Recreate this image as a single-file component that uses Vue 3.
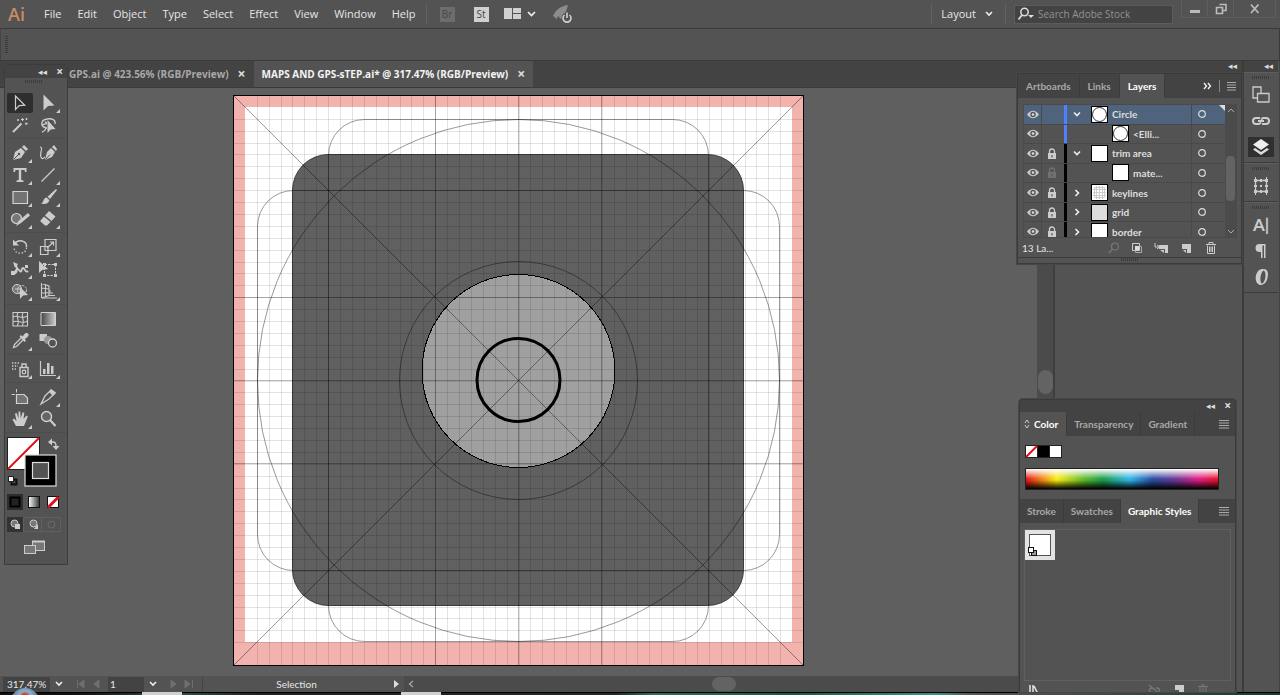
<script setup>
import { ref } from 'vue'

const menus = ['File', 'Edit', 'Object', 'Type', 'Select', 'Effect', 'View', 'Window', 'Help']

const L = '#cccccc'
const s = (d, w = 1.3, extra = '') => `<path d="${d}" fill="none" stroke="${L}" stroke-width="${w}" ${extra}/>`
const f = (d, c = L) => `<path d="${d}" fill="${c}"/>`

const toolGroups = [
  [
    { name: 'Selection', active: true, art: s('M5.5 3V16.5L9.2 12.6L14.8 12.2Z', 1.2) },
    { name: 'Direct Selection', more: true, art: f('M5.5 1.500V17.500L10 13L16.500 12.500Z') },
    { name: 'Magic Wand', art: s('M3 17L11.5 8.5', 2) + s('M12.5 3V6M11 4.5H14M16 7.500V10M15 8.700H18M8 4V6M7 5H9M16.500 3V5M15.500 4H17.500', 1) },
    { name: 'Lasso', art: s('M9 13C2 13 2 5 9 4C14 3 18 5 17 9M7 9C4 9 4 12 6 12C9 12 8 16 4 17M7 9C9 9 9 7 7 7', 1.3) + f('M9.500 5V18L12.700 14.500L17.500 14Z') }
  ],
  [
    { name: 'Pen', more: true, art: f('M3 17L5 9L11 5L15 9L11 15Z M12 4L14 2L18 6L16 8Z') + '<path d="M3.500 16.500L8.500 11.500" stroke="#535353" stroke-width="1"/><circle cx="9" cy="11" r="1.200" fill="#535353"/>' },
    { name: 'Curvature', art: f('M7 17L9 9L13 5L17 9L14 14Z M14 4L16 2L19 6L18 8Z') + s('M2 4C6 4 1 11 3 14C4 17 6 15 7 14', 1.2) + '<path d="M7.500 16.500L12 11.500" stroke="#535353"/>' },
    { name: 'Type', more: true, art: f('M3.500 3H16.500V7H15L14.500 5H11.200V15L13.500 15.500V17H6.500V15.500L8.800 15V5H5.500L5 7H3.500Z') },
    { name: 'Line', more: true, art: s('M3.500 16.500L16.500 3.500', 1.3) },
    { name: 'Rectangle', more: true, art: '<path d="M3 4.500H17.500V16.500H3Z" fill="#737373" stroke="#d2d2d2" stroke-width="1.200"/>' },
    { name: 'Paintbrush', more: true, art: f('M18 2L19 3L12 12L9.500 9.700Z M8.500 10.500L11.300 13C11 17 6 17.500 3 16.500C6 15.500 5 11 8.500 10.500Z') },
    { name: 'Shaper', more: true, art: '<circle cx="6.500" cy="9.500" r="5" fill="#777" stroke="#d2d2d2" stroke-width="1.200"/>' + f('M18 4L20 6.500L11 14L6 17L8.500 12Z') },
    { name: 'Eraser', more: true, art: f('M11 2L17.500 7.500L13.500 12L7 6.500Z M6 7.500L12.500 13L9 16.500H7L2.500 12.500V11.500Z') }
  ],
  [
    { name: 'Rotate', more: true, art: s('M4.500 7C8 1.500 17 3.500 16.500 10', 1.4) + s('M16.500 10.500C16 18 5 18 4 11', 1.3, 'stroke-dasharray="1.500 1.700"') + f('M3 2.500V8.500H9Z') },
    { name: 'Scale', more: true, art: s('M7 2.500H18V13.500H7ZM2.500 9.500H10V17.500H2.500Z', 1.2) + s('M9 11L15.500 5M12 5H15.500V8.500', 1.2) },
    { name: 'Width', more: true, art: s('M2.500 14C7 16 8 10 6 6M5 13C9 4 10 18 12 10C14 6 15 15 18 12', 1.8) + f('M3 3L8 5L5 9ZM1 12H5V16H1ZM15 6H18V9H15Z') },
    { name: 'Free Transform', art: s('M6.500 5.500H17.500V16.500H6.500Z', 1, 'stroke-dasharray="2.500 1"') + f('M5 4H8V7H5ZM16 4H19V7H16ZM16 15H19V18H16ZM5 15H8V18H5ZM1 2V14L4 11L10 10Z') },
    { name: 'Shape Builder', more: true, art: '<circle cx="7" cy="8" r="4.500" fill="#777" stroke="#d2d2d2"/><circle cx="12" cy="9" r="4.500" fill="none" stroke="#d2d2d2" stroke-dasharray="2 1"/>' + f('M10 6V18L13 14.500L18 14Z') + s('M5 8H11', 1) },
    { name: 'Perspective Grid', more: true, art: s('M3.500 2V17M3.500 2.500L11 5V14.500L3.500 17M7.500 4V16M3.500 7L11 8M3.500 12L11 11.500', 1.1) + s('M4 17H19M11 14.500H17M11 12H15M11 10H13', 1) }
  ],
  [
    { name: 'Mesh', art: s('M3 3.500H17.500V17H3ZM3 8C8 5 11 11 17.500 7M3 13C8 10 12 16 17.500 12M8 3.500C5 8 11 12 7 17M13 3.500C10 8 16 11 12 17', 1.1) },
    { name: 'Gradient', art: '<defs><linearGradient id="tg"><stop stop-color="#444"/><stop offset="1" stop-color="#ccc"/></linearGradient></defs><path d="M3 3.500H17.500V16.500H3Z" fill="url(#tg)" stroke="#d2d2d2"/>' },
    { name: 'Eyedropper', more: true, art: s('M11 7L4.500 13.500L3.500 16.500L6.500 15.500L13 9', 1.3) + f('M9.500 5.500L11 4L12.500 5.500L15 2.500C18 1 20 4 17.500 6L14.800 8L16 9.500L14.500 11Z') },
    { name: 'Blend', art: f('M1.500 3H9V10H1.500Z') + '<circle cx="10" cy="9" r="4" fill="#999"/><circle cx="14.500" cy="12" r="4" fill="#535353" stroke="#d2d2d2" stroke-width="1.300"/>' }
  ],
  [
    { name: 'Symbol Sprayer', more: true, art: s('M10 8.500H18V17.500H10ZM12 8V5H16V8', 1.4) + '<circle cx="14" cy="13" r="1.800" fill="none" stroke="#d2d2d2" stroke-width="1.200"/>' + s('M2 4H10M2 7H8M2 10H6', 1.4, 'stroke-dasharray="1.400 1.400"') },
    { name: 'Column Graph', more: true, art: s('M2.500 2V16.500H18', 1.2) + f('M5 10H7.500V15H5ZM9 4H11.500V15H9ZM13 7H15.500V15H13Z') }
  ],
  [
    { name: 'Artboard', art: '<path d="M6.500 7.500H14L17.500 11V16.500H6.500Z" fill="#737373" stroke="#d2d2d2" stroke-width="1.200"/>' + s('M6.500 2V5.500M1.500 7.500H5', 1) },
    { name: 'Slice', more: true, art: s('M3 17L7 9L13 3L17 6L11 12Z', 1.3) + f('M13 2L18 5.500L15 9L11 5Z') },
    { name: 'Hand', more: true, art: f('M6 17L2.500 10.500L4 9.500L6.500 12L5 4.500L6.700 4L8.500 9.500V2.500H10.300L10.700 9L12.700 3.200L14.300 3.700L13.500 10L16.500 6.500L17.800 7.500L14 17Z') },
    { name: 'Zoom', art: '<circle cx="8.500" cy="7.500" r="5" fill="#666" stroke="#d2d2d2" stroke-width="1.400"/>' + s('M12 11L17.500 17', 2.2) }
  ]
]

const layers = ref([
  { name: 'Circle', thumb: 'ring', color: 'blue', open: true, selected: true },
  { name: '<Elli...', thumb: 'ring', color: 'blue', child: true },
  { name: 'trim area', thumb: 'plain', color: 'black', open: true, lock: 'on' },
  { name: 'mate...', thumb: 'plain', color: 'black', child: true, lock: 'dim' },
  { name: 'keylines', thumb: 'keys', color: 'black', closed: true, lock: 'on' },
  { name: 'grid', thumb: 'grey', color: 'black', closed: true, lock: 'on' },
  { name: 'border', thumb: 'plain', color: 'black', closed: true, lock: 'on' }
])

const step = 571 / 48
const gridLines = Array.from({ length: 45 }, (_, i) => Math.round((i + 2) * step) + 0.5)
const guides = [202.5, 285.5, 368.5]
</script>

<template>
  <div class="app">
    <header class="menubar">
      <span class="logo">Ai</span>
      <nav class="menus">
        <button v-for="m in menus" :key="m">{{ m }}</button>
      </nav>
      <span class="rule"></span>
      <button class="sq dim">Br</button>
      <button class="sq">St</button>
      <button class="arrange" aria-label="Arrange documents">
        <svg width="32" height="14" viewBox="0 0 32 14"><path d="M0 1H8V12H0ZM9 1H17V6H9ZM9 7H17V12H9Z" fill="#d0d0d0" /><path d="M24 5L27.500 8.500L31 5" fill="none" stroke="#eee" stroke-width="1.700" /></svg>
      </button>
      <button class="gpu" aria-label="GPU performance">
        <svg width="22" height="20" viewBox="0 0 22 20"><path d="M1 12C3 7 8 2 16 1C15 6 13 10 9 15L6 12ZM1 12L6 11L5 15Z" fill="#8c8c8c" /><circle cx="15" cy="14" r="5.500" fill="#535353" /><path d="M12.500 11A4 4 0 1 0 17.500 11M15 8.500V14" fill="none" stroke="#d0d0d0" stroke-width="1.600" /></svg>
      </button>
      <span class="grow"></span>
      <span class="rule"></span>
      <button class="layout">Layout
        <svg width="8" height="6" viewBox="0 0 8 6"><path d="M1 1L4 4L7 1" fill="none" stroke="#eee" stroke-width="1.600" /></svg>
      </button>
      <span class="rule"></span>
      <label class="search">
        <svg width="18" height="14" viewBox="0 0 18 14"><circle cx="7.500" cy="5" r="3.700" fill="none" stroke="#ddd" stroke-width="1.500" /><path d="M5 8L1.500 12.500" stroke="#ddd" stroke-width="1.800" /><path d="M11 8H17L14 11Z" fill="#ddd" /></svg>
        <input type="search" placeholder="Search Adobe Stock" aria-label="Search Adobe Stock" />
      </label>
      <div class="winbtns">
        <button aria-label="Minimize"><svg width="12" height="12" viewBox="0 0 12 12"><path d="M1 7H11V10H1Z" fill="#bbb" /></svg></button>
        <button aria-label="Restore"><svg width="12" height="12" viewBox="0 0 12 12"><path d="M4.500 1.500H11V7.500H8M1.500 4.500H7.500V10.500H1.500Z" fill="none" stroke="#bbb" stroke-width="1.600" /></svg></button>
        <button class="wide" aria-label="Close"><svg width="12" height="12" viewBox="0 0 12 12"><path d="M2 1.500L9.500 10M9.500 1.500L2 10" stroke="#bbb" stroke-width="1.800" /></svg></button>
      </div>
    </header>

    <div class="control"><span class="vgrip"></span></div>

    <div class="main">
      <section class="doc">
        <div class="tabs" role="tablist">
          <button class="tab first" role="tab">GPS.ai @ 423.56% (RGB/Preview)<span class="x">×</span></button>
          <button class="tab on" role="tab" aria-selected="true">MAPS AND GPS-sTEP.ai* @ 317.47% (RGB/Preview)<span class="x">×</span></button>
        </div>
        <div class="stage">
          <div class="canvas">
            <svg class="board" viewBox="0 0 571 571">
              <rect width="571" height="571" fill="#f2b2ad" />
              <rect x="12" y="12" width="547" height="535" fill="#fff" />
              <rect x="59.500" y="59.500" width="451" height="451" rx="36" fill="#606060" stroke="#3c3c3c" />
              <circle cx="285.500" cy="276" r="96.500" fill="#a0a0a0" stroke="#000" shape-rendering="crispEdges" />
              <g stroke="#000" stroke-opacity="0.110">
                <path v-for="g in gridLines" :key="g" :d="`M${g} 0V571M0 ${g}H571`" />
              </g>
              <g fill="none" stroke="#000" stroke-opacity="0.400">
                <path d="M0 0L571 571M571 0L0 571" />
                <path v-for="g in guides" :key="g" :d="`M${g} 0V571M0 ${g}H571`" stroke-opacity="0.280" />
                <rect x="95.500" y="24.500" width="380" height="522" rx="36" />
                <rect x="24.500" y="95.500" width="522" height="380" rx="36" />
                <circle cx="285.500" cy="285.500" r="261" />
                <circle cx="285.500" cy="285.500" r="119" />
              </g>
              <circle cx="285.500" cy="285" r="41.500" fill="none" stroke="#000" stroke-width="3" />
              <rect x="0.500" y="0.500" width="570" height="570" fill="none" stroke="#000" />
            </svg>
          </div>
          <div class="vscroll"><span></span></div>
        </div>
        <footer class="status">
          <input class="zoomval" value="317.47%" aria-label="Zoom level" />
          <button class="pick" aria-label="Zoom presets"><svg width="8" height="6" viewBox="0 0 8 6"><path d="M1 1L4 4L7 1" fill="none" stroke="#eee" stroke-width="1.600" /></svg></button>
          <button class="nav" aria-label="First and previous artboard"><svg width="24" height="10" viewBox="0 0 24 10"><path d="M1.500 1V9M8 1L3 5L8 9ZM23 1L18 5L23 9Z" fill="#777" stroke="#777" /></svg></button>
          <input class="num" value="1" aria-label="Artboard number" />
          <button class="pick" aria-label="Artboards"><svg width="8" height="6" viewBox="0 0 8 6"><path d="M1 1L4 4L7 1" fill="none" stroke="#eee" stroke-width="1.600" /></svg></button>
          <button class="nav" aria-label="Next and last artboard"><svg width="24" height="10" viewBox="0 0 24 10"><path d="M1 1L6 5L1 9ZM15 1L20 5L15 9ZM22.500 1V9" fill="#777" stroke="#777" /></svg></button>
          <span class="toolname">Selection</span>
          <button class="play" aria-label="Status menu"><svg width="6" height="8" viewBox="0 0 6 8"><path d="M0 0L5 4L0 8Z" fill="#ddd" /></svg></button>
          <div class="hscroll"><svg width="6" height="8" viewBox="0 0 6 8"><path d="M5 1L1.500 4L5 7" fill="none" stroke="#aaa" stroke-width="1.200" /></svg><span></span></div>
        </footer>
      </section>

      <aside class="dock"><div class="docktop">◂◂</div></aside>
      <aside class="icons">
        <div class="docktop">◂◂</div>
        <div class="igroup">
          <span class="grip"></span>
          <button aria-label="Artboards"><svg viewBox="0 0 20 20"><path d="M2 2H10V13H2Z" fill="none" stroke="#ccc" stroke-width="1.300" /><path d="M6.500 8.500H18V17H6.500Z" fill="#535353" stroke="#ccc" stroke-width="1.300" /></svg></button>
          <button aria-label="Links"><svg viewBox="0 0 20 20"><path d="M9 7H5A3 3 0 0 0 5 13H8L10 11.500M11 13H15A3 3 0 0 0 15 7H12L10 8.500M7 10H13" fill="none" stroke="#ccc" stroke-width="2" /></svg></button>
          <button class="on" aria-label="Layers"><svg viewBox="0 0 20 20"><path d="M10 2L18 7.500L10 13L2 7.500Z" fill="#eee" /><path d="M4 11L10 15L16 11L18 12.500L10 18L2 12.500Z" fill="#ddd" /></svg></button>
        </div>
        <div class="igroup">
          <span class="grip"></span>
          <button aria-label="Transform"><svg viewBox="0 0 20 20"><path d="M4.500 4.500H15.500V15.500H4.500Z" fill="none" stroke="#ccc" stroke-width="1.300" /><path d="M3 3H6V6H3ZM14 3H17V6H14ZM3 14H6V17H3ZM14 14H17V17H14ZM9 3H11V6H9ZM9 14H11V17H9ZM3 9H6V11H3ZM14 9H17V11H14ZM9 9H11V11H9ZM4 1H5V3H4ZM15 1H16V3H15ZM4 17H5V19H4ZM15 17H16V19H15Z" fill="#ccc" /></svg></button>
        </div>
        <div class="igroup">
          <span class="grip"></span>
          <button class="glyph" aria-label="Character">A|</button>
          <button aria-label="Paragraph"><svg viewBox="0 0 20 20"><path d="M14.500 3H8.500A4 4 0 0 0 8.500 11H10V17H11.500V4.500H13V17H14.500Z" fill="#ccc" /></svg></button>
          <button aria-label="OpenType"><svg viewBox="0 0 20 20"><path fill-rule="evenodd" d="M11 2C18 1 18 8 15.500 14C13.500 18 9 19 7 17C3 14 4 3 11 2ZM12.500 3.500C10 5 8 13 10.500 16.500C14 17 16.500 5 12.500 3.500Z" fill="#ccc" /></svg></button>
        </div>
      </aside>
    </div>

    <div class="taskbar"><span class="orb"></span><i class="t1"></i><i class="t2"></i></div>

    <aside class="tools">
      <div class="tbar"><span>◂◂</span><b>×</b></div>
      <span class="grip"></span>
      <div v-for="(g, gi) in toolGroups" :key="gi" class="tgroup">
        <button v-for="t in g" :key="t.name" :class="{ on: t.active, more: t.more }" :aria-label="t.name">
          <svg viewBox="0 0 20 20" v-html="t.art"></svg>
        </button>
      </div>
      <svg class="paint" width="60" height="122" viewBox="1 0 60 122">
        <rect x="3.500" y="4.500" width="32" height="32" fill="#fff" stroke="#222" />
        <path d="M4 36L35 5" stroke="#e0101c" stroke-width="2" />
        <rect x="21" y="22" width="31" height="31" fill="#000" stroke="#ddd" stroke-width="1.200" />
        <rect x="28.500" y="29.500" width="16" height="16" fill="#535353" stroke="#ddd" stroke-width="1.200" />
        <path d="M46 9H49Q52 9 52 13V15" fill="none" stroke="#ccc" stroke-width="1.400" /><path d="M44 9L48 5.500V12.500ZM48.500 13H55.500L52 17Z" fill="#ccc" />
        <rect x="7.500" y="46.500" width="5" height="5" stroke="#111" fill="#444" stroke-width="2" /><rect x="4.500" y="43.500" width="5" height="5" fill="#fff" stroke="#222" />
        <rect x="3" y="61" width="16" height="16" fill="#2d2d2d" /><rect x="6.500" y="64.500" width="9" height="9" fill="#222" stroke="#000" stroke-width="2" />
        <defs><linearGradient id="sw"><stop stop-color="#fff" /><stop offset="1" stop-color="#333" /></linearGradient></defs>
        <rect x="24.500" y="63.500" width="11" height="11" fill="url(#sw)" stroke="#111" />
        <rect x="43.500" y="63.500" width="11" height="11" fill="#fff" stroke="#111" /><path d="M44 74.500L54.500 64" stroke="#e0101c" stroke-width="3" />
        <rect x="3" y="84" width="16" height="15" fill="#333" /><path d="M19.500 84.500H56.500V98.500H19.500ZM37.500 84.500V98.500" fill="none" stroke="#606060" />
        <circle cx="10.500" cy="90.500" r="3.500" fill="#777" stroke="#ccc" /><rect x="11" y="91" width="5" height="5" fill="#ccc" />
        <circle cx="29.500" cy="90.500" r="3.500" fill="#777" stroke="#ccc" /><path d="M30 96H34V91Z" fill="#ccc" />
        <circle cx="47.500" cy="91.500" r="3.500" fill="none" stroke="#6c6c6c" />
        <rect x="28.500" y="108.500" width="12" height="9" fill="#777" stroke="#ccc" /><rect x="20.500" y="112.500" width="11" height="8" fill="#777" stroke="#ccc" /><path d="M28 108.500H41" stroke="#ccc" stroke-width="2" />
      </svg>
    </aside>

    <aside class="panel layers">
      <div class="ptabs" role="tablist">
        <button role="tab">Artboards</button><button role="tab">Links</button><button class="on" role="tab" aria-selected="true">Layers</button>
        <span class="grow"></span>
        <svg class="pmenu" width="34" height="12" viewBox="0 0 34 12"><path d="M1 3L3.500 6L1 9M5 3L7.500 6L5 9" fill="none" stroke="#eee" stroke-width="1.400" /><path d="M16.500 0V12" stroke="#888" /><path d="M24 2.500H33M24 5H33M24 7.500H33M24 10H33" stroke="#aaa" stroke-width="1.200" /></svg>
      </div>
      <div class="lwrap">
        <ul class="llist">
          <li v-for="l in layers" :key="l.name" :class="{ sel: l.selected, child: l.child }">
            <button class="eye" aria-label="Visibility"><svg width="12" height="9" viewBox="0 0 12 9"><path d="M0 4.500Q6 -3 12 4.500Q6 12 0 4.500Z" fill="#ccc" /><circle cx="6" cy="4.500" r="2.700" fill="#555" /><circle cx="6" cy="4.500" r="1.300" fill="#ddd" /></svg></button>
            <button class="lock" aria-label="Lock"><svg v-if="l.lock" :class="l.lock" width="8" height="11" viewBox="0 0 8 11"><path d="M0 5H8V11H0Z" fill="#ccc" /><path d="M1.500 5V3.500A2.500 2.500 0 0 1 6.500 3.500V5" fill="none" stroke="#ccc" stroke-width="1.300" /><path d="M3.500 7H4.500V9.500H3.500Z" fill="#444" /></svg></button>
            <i class="bar" :class="l.color"></i>
            <button class="tw" aria-label="Expand"><svg v-if="!l.child" width="8" height="8" viewBox="0 0 8 8"><path :d="l.open ? 'M1 2.500L4 5.500L7 2.500' : 'M2.500 1L5.500 4L2.500 7'" fill="none" stroke="#eee" stroke-width="1.600" /></svg></button>
            <svg class="thumb" width="17" height="17" viewBox="0 0 17 17">
              <rect x="0.500" y="0.500" width="16" height="16" :fill="l.thumb === 'grey' ? '#ddd' : '#fff'" stroke="#000" />
              <circle v-if="l.thumb === 'ring'" cx="8.500" cy="8.500" r="7" fill="none" stroke="#333" />
              <path v-if="l.thumb === 'keys'" d="M2 5.500H15M2 8.500H15M2 11.500H15M5.500 2V15M8.500 2V15M11.500 2V15M3.500 3.500H13.500V13.500H3.500Z" fill="none" stroke="#ccc" />
            </svg>
            <span class="lname">{{ l.name }}</span>
            <span class="target"><svg width="8" height="8" viewBox="0 0 8 8"><circle cx="4" cy="4" r="3.300" fill="none" stroke="#ddd" stroke-width="1.200" /></svg></span>
          </li>
        </ul>
        <div class="lscroll">
          <svg width="8" height="6" viewBox="0 0 8 6"><path d="M1 5L4 2L7 5" fill="none" stroke="#aaa" /></svg>
          <span></span>
          <svg width="8" height="6" viewBox="0 0 8 6"><path d="M1 1L4 4L7 1" fill="none" stroke="#aaa" /></svg>
        </div>
      </div>
      <div class="lfoot">
        <span>13 La...</span>
        <svg width="110" height="12" viewBox="0 0 110 12">
          <circle cx="9" cy="4.500" r="3.500" fill="none" stroke="#777" stroke-width="1.200" /><path d="M6.500 7L3 11" stroke="#777" stroke-width="1.500" />
          <path d="M26.500 1.500H33.500V8.500H26.500Z" fill="none" stroke="#ccc" /><path d="M29.500 4.500H35.500V10.500H29.500Z" fill="none" stroke="#aaa" /><path d="M29 4H33V8H29Z" fill="#ddd" />
          <path d="M53 3H62V11H59V7H53Z" fill="#ccc" /><path d="M54 8H58V11Z" fill="#ccc" /><path d="M49 1V5H53M51 3L53.500 5L51 7" fill="none" stroke="#ccc" />
          <path d="M76 2H85V11H81V7H76Z" fill="#ccc" /><path d="M77 8H80V11Z" fill="#ccc" />
          <path d="M100 2.500H110M103 2V0.500H107V2M101.500 3.500V11.500H108.500V3.500M103.500 4.500V10M105 4.500V10M106.500 4.500V10" fill="none" stroke="#ccc" />
        </svg>
      </div>
      <div class="resize"><span class="grip"></span></div>
    </aside>

    <aside class="panel colors">
      <div class="tbar"><span>◂◂</span><b>×</b></div>
      <div class="ptabs" role="tablist">
        <button class="on first" role="tab" aria-selected="true"><svg width="6" height="10" viewBox="0 0 6 10"><path d="M1 4L3 1L5 4M1 6L3 9L5 6" fill="none" stroke="#ccc" /></svg>Color</button><button role="tab">Transparency</button><button role="tab">Gradient</button>
        <span class="grow"></span>
        <svg class="pmenu" width="10" height="10" viewBox="0 0 10 10"><path d="M0 1.500H10M0 4H10M0 6.500H10M0 9H10" stroke="#aaa" stroke-width="1.200" /></svg>
      </div>
      <div class="cbody">
        <svg width="37" height="13" viewBox="0 0 37 13"><rect width="37" height="13" fill="#222" /><rect x="1" y="1" width="11" height="11" fill="#fff" /><path d="M1 12L12 1" stroke="#e0101c" stroke-width="2" /><rect x="13" y="1" width="11" height="11" /><rect x="25" y="1" width="11" height="11" fill="#fff" /></svg>
        <div class="spectrum"></div>
      </div>
      <div class="ptabs" role="tablist">
        <button role="tab">Stroke</button><button role="tab">Swatches</button><button class="on" role="tab" aria-selected="true">Graphic Styles</button>
        <span class="grow"></span>
        <svg class="pmenu" width="10" height="10" viewBox="0 0 10 10"><path d="M0 1.500H10M0 4H10M0 6.500H10M0 9H10" stroke="#aaa" stroke-width="1.200" /></svg>
      </div>
      <div class="styles">
        <button aria-label="Default graphic style"><svg width="30" height="30" viewBox="0 0 30 30"><rect width="30" height="30" fill="#e4e2e2" /><rect x="4.500" y="4.500" width="21" height="21" fill="#fff" stroke="#555" /><rect x="6.500" y="20.500" width="5" height="5" fill="#999" stroke="#111" /><rect x="3.500" y="17.500" width="5" height="5" fill="#fff" stroke="#111" /></svg></button>
      </div>
      <div class="sfoot">
        <svg width="10" height="10" viewBox="0 0 10 10"><path d="M1 1V10M4 1V10M5 2L9 10" stroke="#ddd" stroke-width="1.600" /></svg>
        <span class="grow"></span>
        <svg width="62" height="10" viewBox="0 0 62 10"><path d="M1 1L12 10M2 8Q0 4 5 4M8 4Q13 4 11 8" fill="none" stroke="#777" stroke-width="1.300" /><path d="M27 1H36V10H31V6H27Z" fill="#ccc" /><path d="M50 2.500H60M53 1H57M52 3V10M55 3V10M58 3V10" stroke="#777" /></svg>
      </div>
    </aside>
  </div>
</template>

<style>
html, body { margin: 0; background: #535353; }
</style>

<style scoped>
* { box-sizing: border-box; }
.app { position: relative; display: flex; flex-direction: column; height: 100vh; overflow: hidden; background: #535353; color: #e6e6e6; font: 11px/16px "Open Sans", "Noto Sans", sans-serif; }
button { border: 0; padding: 0; margin: 0; background: none; color: inherit; font: inherit; white-space: nowrap; display: flex; align-items: center; justify-content: center; }
input { border: 0; padding: 0; margin: 0; background: none; color: inherit; font: inherit; min-width: 0; outline: 0; }
svg { display: block; flex: none; }
.grow { flex: 1; }

.menubar { display: flex; align-items: center; height: 28px; flex: none; }
.logo { width: 44px; padding-left: 8px; color: #c98a63; font: 600 18px/26px "Open Sans", sans-serif; }
.menus { display: flex; gap: 16px; }
.rule { width: 1px; height: 20px; background: #626262; }
.menus + .rule { margin: 0 13px 0 10px; }
.sq { width: 15px; height: 15px; margin-right: 19px; background: #d0d0d0; color: #444; font-size: 10px; }
.sq.dim { background: #6c6c6c; color: #484848; }
.arrange { margin-left: -4px; }
.gpu { margin-left: 16px; }
.layout { margin: 0 12px 0 9px; gap: 9px; }
.search { display: flex; align-items: center; width: 159px; height: 19px; margin: 0 8px; padding-left: 2px; background: #434343; border: 1px solid #5c5c5c; gap: 3px; }
.search input { width: 130px; appearance: none; font: 10px/16px "Open Sans", sans-serif; }
.search input::placeholder { color: #929292; opacity: 1; }
.winbtns { display: flex; align-self: flex-start; height: 18px; border: 1px solid #5e5e5e; border-top: 0; margin-right: 4px; }
.winbtns button { width: 26px; border-right: 1px solid #5e5e5e; }
.winbtns .wide { width: 41px; border: 0; }

.control { height: 33px; flex: none; border: 1px solid #3a3a3a; border-left-color: #444; display: flex; align-items: center; padding-left: 4px; }
.vgrip { width: 3px; height: 18px; background: repeating-linear-gradient(#3c3c3c 0 1px, #535353 1px 2px); }

.main { flex: 1; display: flex; min-height: 0; }
.doc { flex: 1; display: flex; flex-direction: column; min-width: 0; }
.tabs { display: flex; height: 27px; flex: none; background: #434343; border-bottom: 1px solid #3a3a3a; }
.tab { height: 26px; gap: 9px; padding: 0 8px; color: #a8a8a8; font: 700 10px/16px "Open Sans", sans-serif; }
.tab.first { padding-left: 69px; }
.tab.on { background: #535353; color: #f4f4f4; }
.tab .x { font: 700 14px/14px "Open Sans", sans-serif; color: #ddd; }
.tbar b { font: 700 12px/12px "Open Sans", sans-serif; }
.stage { flex: 1; display: flex; min-height: 0; }
.canvas { flex: 1; min-width: 0; padding: 7px 0 10px; background: #5f5f5f; }
.board { width: 100%; height: 100%; }
.vscroll { width: 18px; background: #4b4b4b; border-right: 2px solid #3e3e3e; display: flex; justify-content: center; padding-top: 282px; }
.vscroll span { width: 15px; height: 24px; border-radius: 8px; background: #636363; }
.status { display: flex; align-items: center; height: 16px; flex: none; background: #535353; font: 10px/15px Lato, sans-serif; }
.zoomval { width: 47px; height: 15px; padding-left: 4px; margin-left: 3px; background: #434343; }
.pick { width: 18px; height: 15px; }
.nav { width: 40px; height: 15px; opacity: .8; }
.num { width: 36px; height: 15px; padding-left: 2px; background: #434343; }
.toolname { width: 188px; text-align: center; border-left: 1px solid #444; }
.play { width: 14px; }
.hscroll { flex: 1; height: 16px; background: #4b4b4b; display: flex; align-items: center; padding-left: 4px; }
.hscroll span { width: 24px; height: 14px; border-radius: 7px; background: #636363; margin-left: 46%; }

.docktop { height: 11px; flex: none; background: #434343; text-align: right; padding-right: 5px; font: 9px/11px "DejaVu Sans", sans-serif; color: #ddd; }
.dock { width: 189px; border-right: 2px solid #3c3c3c; background: #535353; }
.icons { width: 36px; border-right: 1px solid #434343; padding-right: 1px; display: flex; flex-direction: column; }
.igroup { display: flex; flex-direction: column; align-items: center; gap: 6px; padding: 3px 0 5px; border-bottom: 1px solid #3c3c3c; border-top: 1px solid #5e5e5e; }
.igroup button { width: 26px; height: 20px; }
.igroup svg { width: 20px; height: 20px; }
.igroup .on { background: #303030; }
.glyph { font: 700 17px/20px Lato, sans-serif; color: #ccc; }
.grip { display: block; width: 18px; height: 3px; background: repeating-linear-gradient(90deg, #3c3c3c 0 1px, #535353 1px 2px); }

.taskbar { position: relative; height: 3px; flex: none; background: linear-gradient(90deg, #111 0 6%, #2c5148 14%, #222 20%, #1c2926 48%, #2a6e5a 51%, #185a48 62%, #3c9088 73%, #555 76%, #1a3a36 100%); border-top: 1px solid #000; }
.taskbar i { position: absolute; bottom: 0; width: 40px; height: 3px; background: #d0d0d0; }
.taskbar .t1 { left: 142px; }
.taskbar .t2 { left: 401px; }
.orb { position: absolute; left: 10px; top: -5px; width: 30px; height: 30px; border-radius: 50%; background: radial-gradient(circle at 50% 30%, #d04020 0 3px, #8bb2d0 6px, #4a7090 14px); }

.tools { position: absolute; left: 4px; top: 64px; width: 64px; height: 501px; background: #535353; border: 1px solid #3c3c3c; border-radius: 4px 4px 0 0; display: flex; flex-direction: column; }
.tbar { display: flex; align-items: center; justify-content: flex-end; gap: 9px; height: 13px; flex: none; padding-right: 4px; background: #434343; font: 9px/12px "DejaVu Sans", sans-serif; color: #ddd; }
.tools .grip { margin: 2px auto 6px 20px; }
.tgroup { display: grid; grid-template-columns: 28px 28px; grid-auto-rows: 22px; padding: 3px 0 2px 1px; border-bottom: 1px solid #4d4d4d; }
.tgroup button { position: relative; }
.tgroup svg { width: 20px; height: 20px; }
.tgroup .on { background: #2e2e2e; margin: 1px; border-radius: 2px; }
.tgroup .more::after { content: ""; position: absolute; right: 2px; bottom: 1px; border: 2px solid transparent; border-right-color: #ccc; border-bottom-color: #ccc; }

.panel { position: absolute; background: #535353; border: 1px solid #3a3a3a; box-shadow: 0 0 0 1px #474747; }
.ptabs { display: flex; align-items: center; flex: none; height: 24px; background: #434343; color: #a8a8a8; font: 700 10px/16px Lato, sans-serif; }
.ptabs button { height: 24px; padding: 0 8px; border-right: 1px solid #3c3c3c; }
.ptabs .on { background: #535353; color: #fff; }
.pmenu { margin-right: 4px; }
.layers { right: 38px; top: 73px; width: 225px; }
.lwrap { display: flex; height: 134px; margin: 6px 4px 0 5px; border: 1px solid #4a4a4a; overflow: hidden; }
.llist { flex: 1; margin: 0; padding: 0; list-style: none; overflow: hidden; display: grid; grid-template-rows: repeat(7, 1fr); height: 137px; }
.llist li { position: relative; display: flex; align-items: center; border-bottom: 1px solid #494949; font: 700 10px/16px Lato, sans-serif; color: #ddd; min-height: 0; }
.llist li.sel { background: #4f647c; }
.llist li.sel::after { content: ""; position: absolute; right: 0; top: 0; border: 3px solid #ddd; border-left-color: transparent; border-bottom-color: transparent; }
.eye { width: 18px; align-self: stretch; border-right: 1px solid #494949; }
.lock { width: 20px; align-self: stretch; }
.lock .dim { opacity: .25; }
.bar { width: 3px; align-self: stretch; margin-left: 2px; }
.bar.blue { background: #4f80ff; }
.bar.black { background: #000; }
.tw { width: 20px; }
.thumb { margin: 0 4px; }
.child .thumb { margin-left: 25px; }
.lname { flex: 1; white-space: nowrap; overflow: hidden; }
.target { width: 34px; align-self: stretch; display: flex; align-items: center; padding-left: 6px; border-left: 1px solid #494949; }
.lscroll { width: 11px; display: flex; flex-direction: column; align-items: center; background: #4b4b4b; padding: 2px 0; }
.lscroll span { width: 9px; height: 45px; margin: 43px 0 auto; border-radius: 4px; background: #636363; }
.lfoot { display: flex; align-items: center; justify-content: space-between; height: 19px; padding: 0 25px 0 4px; font: 10px/16px Lato, sans-serif; }
.resize { height: 6px; border-top: 1px solid #3c3c3c; display: flex; justify-content: center; }

.colors { right: 44px; top: 399px; bottom: 3px; width: 217px; border-radius: 4px 4px 0 0; display: flex; flex-direction: column; border-bottom: 0; overflow: hidden; }
.colors .tbar { height: 12px; }
.colors .ptabs button { padding: 0 7px; }
.colors .ptabs .first { padding: 0 8px 0 4px; gap: 4px; }
.colors .pmenu { margin-right: 6px; }
.cbody { padding: 9px 16px 7px 5px; height: 63px; flex: none; }
.spectrum { height: 22px; margin-top: 10px; border: 1px solid #222; background: linear-gradient(#fff, rgba(255,255,255,0) 50%, rgba(0,0,0,0) 55%, #000), linear-gradient(90deg, #e5131a, #f8ec10 16%, #62b82a 30%, #1a9c46 40%, #2fb5e8 54%, #2a4ba0 66%, #6a3896 78%, #e01c80 90%, #e5132a); }
.styles { flex: 1; margin: 6px 4px 0; border: 1px solid #606060; }
.styles button { width: 30px; }
.sfoot { display: flex; height: 11px; flex: none; padding: 3px 25px 0 9px; }
</style>
